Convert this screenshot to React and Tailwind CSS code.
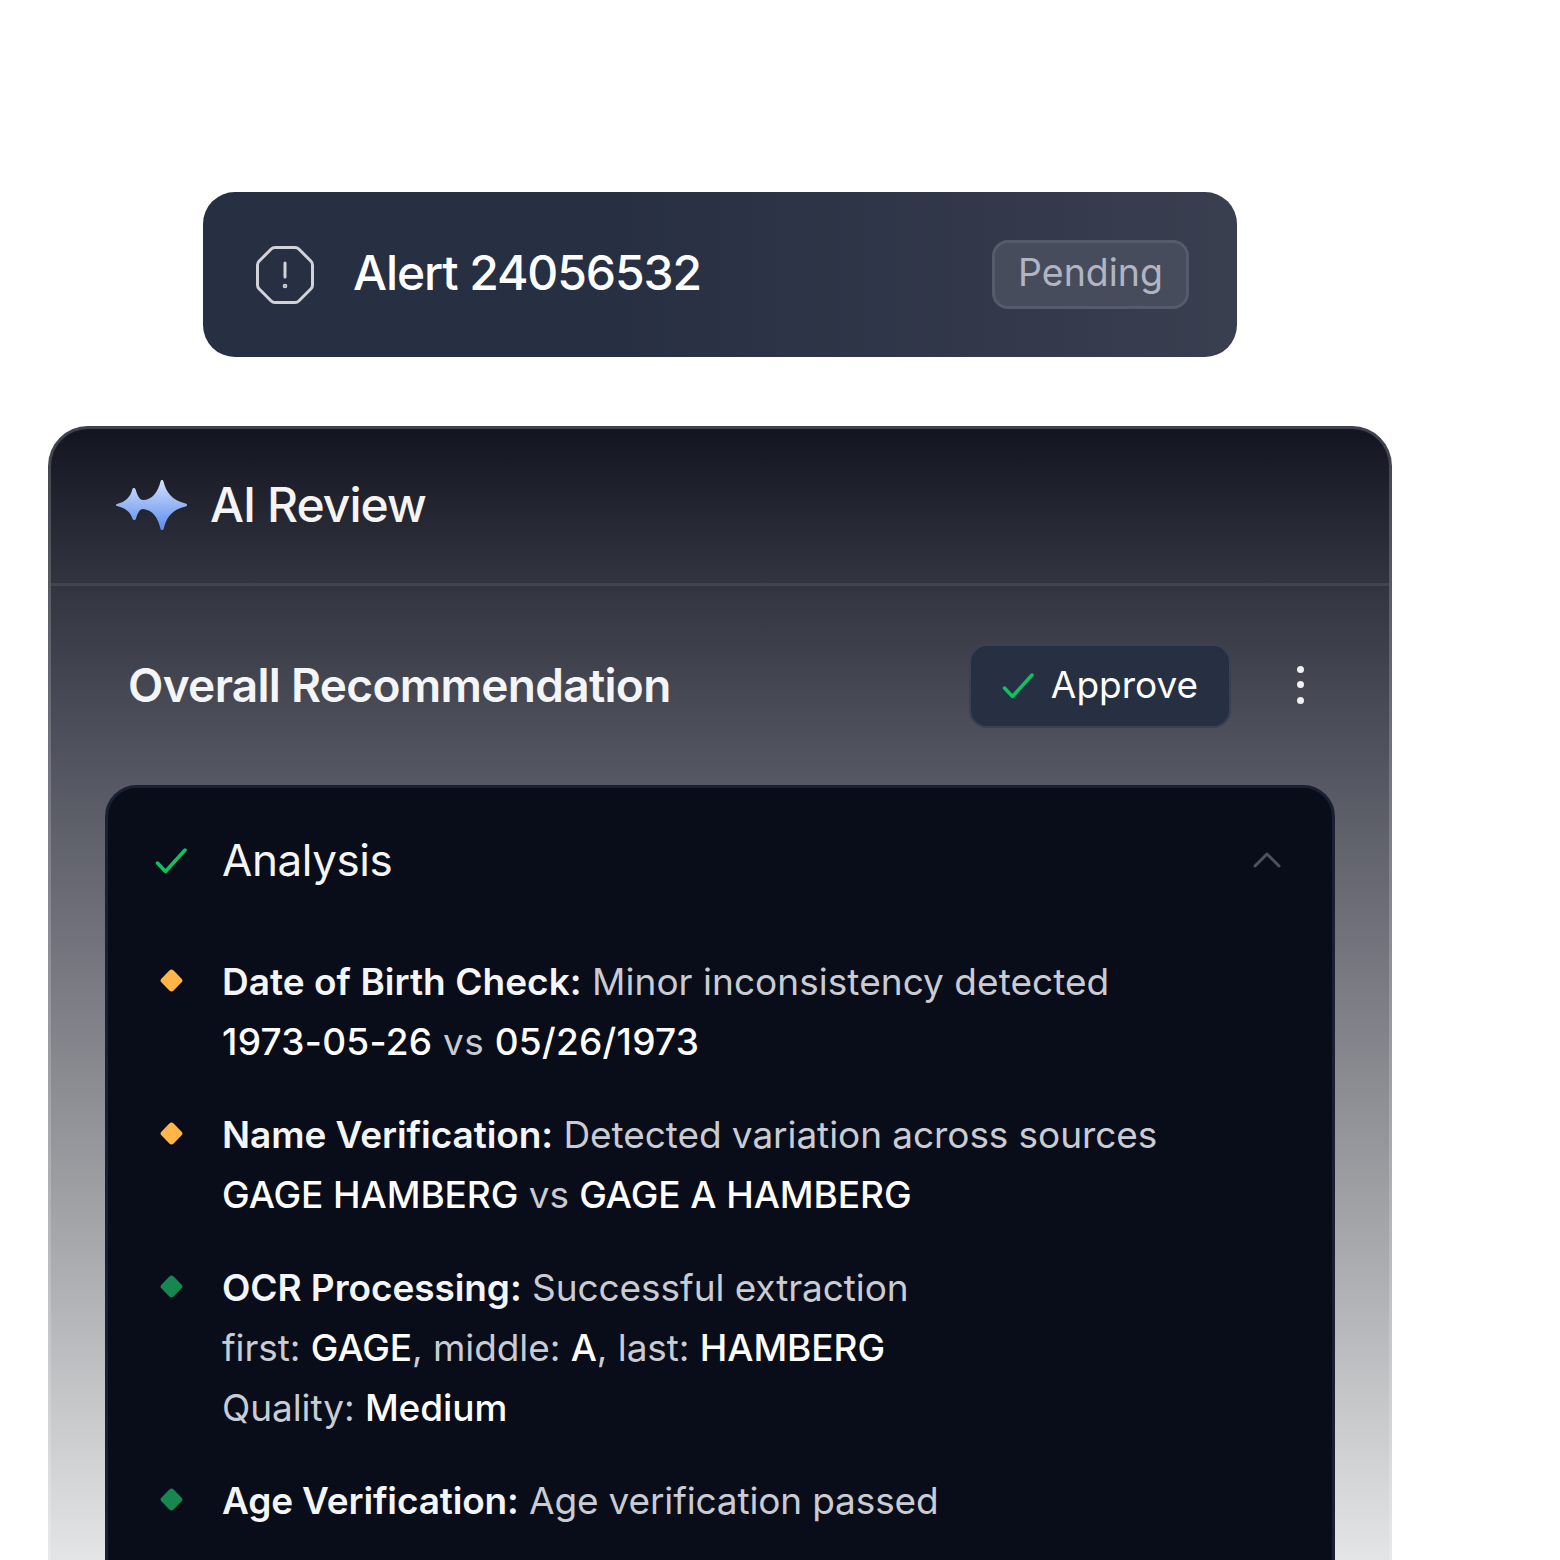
import { ChevronUp } from 'lucide-react'

const findings = [
  {
    color: 'bg-[#ffb547]',
    lines: [
      <span className="tracking-[0.001em]"><b className="font-semibold text-[#f4f5f7]">Date of Birth Check:</b> Minor inconsistency detected</span>,
      <span className="tracking-[0.0075em]"><span className="font-medium text-white">1973-05-26</span> vs <span className="font-medium text-white">05/26/1973</span></span>,
    ],
  },
  {
    color: 'bg-[#ffb547]',
    lines: [
      <><b className="font-semibold text-[#f4f5f7]">Name Verification:</b> Detected variation across sources</>,
      <><span className="font-medium text-white">GAGE HAMBERG</span> vs <span className="font-medium text-white">GAGE A HAMBERG</span></>,
    ],
  },
  {
    color: 'bg-[#16884f]',
    lines: [
      <><b className="font-semibold text-[#f4f5f7]">OCR Processing:</b> Successful extraction</>,
      <>first: <span className="font-medium text-white">GAGE</span>, middle: <span className="font-medium text-white">A</span>, last: <span className="font-medium text-white">HAMBERG</span></>,
      <>Quality: <span className="font-medium text-white">Medium</span></>,
    ],
  },
  {
    color: 'bg-[#16884f]',
    lines: [
      <span className="tracking-[-0.004em]"><b className="font-semibold text-[#f4f5f7]">Age Verification:</b> Age verification passed</span>,
    ],
  },
]

function GreenCheck() {
  return (
    <svg width="32" height="27" viewBox="0 0 32 27" fill="none" stroke="#10c161" strokeWidth="3.5" strokeLinecap="round" strokeLinejoin="round" className="shrink-0">
      <polyline points="2.5,16 10.5,24.5 30,3" />
    </svg>
  )
}

function Sparkle() {
  return (
    <svg width="71" height="50" viewBox="0 0 71 50" className="shrink-0">
      <defs>
        <linearGradient id="spark" x1="0" y1="0" x2="0" y2="1">
          <stop offset="0" stopColor="#d3e0fc" />
          <stop offset="1" stopColor="#5c8cee" />
        </linearGradient>
      </defs>
      <path
        fill="url(#spark)"
        d="M44.5 1.5C45.2-.4 46.8-.4 47.5 1.5C50 12 56 20.5 69.5 23.5C71.5 24 71.5 26 69.5 26.5C56 29.5 50 38 47.8 48.5C47.2 50.5 45 50.5 44.4 48.5C42 38 37 30 27 29C24 29 22 32 20 38.5C19.3 40.5 17 40.5 16.4 38.5C14.5 32 9.5 28 1 26C-.4 25.5 -.4 24.5 1 24C9.5 22 14.5 17 16.2 9.5C16.8 7.5 19 7.5 19.6 9.5C21.5 15.5 23.5 20 27 20C36 20 42 12 44.5 1.5Z"
      />
    </svg>
  )
}

export default function App() {
  return (
    <div className="h-[1560px] overflow-hidden bg-white pt-[192px] font-['Inter',sans-serif]">
      {/* Alert bar */}
      <div className="ml-[203px] flex h-[165px] w-[1034px] items-center justify-between rounded-[32px] bg-gradient-to-r from-[#272f42] from-40% to-[#3a3f50] pl-[52px] pr-[48px]">
        <div className="flex items-center gap-[38px]">
          <svg width="60" height="60" viewBox="0 0 60 60" fill="none" stroke="#d1d3d9" strokeWidth="3" strokeLinecap="round" strokeLinejoin="round">
            <path d="M20 2.5H40C41.5 2.5 42.8 3 43.8 4L56 16.2C57 17.2 57.5 18.5 57.5 20V40C57.5 41.5 57 42.8 56 43.8L43.8 56C42.8 57 41.5 57.5 40 57.5H20C18.5 57.5 17.2 57 16.2 56L4 43.8C3 42.8 2.5 41.5 2.5 40V20C2.5 18.5 3 17.2 4 16.2L16.2 4C17.2 3 18.5 2.5 20 2.5Z" />
            <path d="M30 18V32" />
            <circle cx="30" cy="41" r="0.8" fill="#d1d3d9" />
          </svg>
          <span className="pb-[4px] text-[48px] font-medium leading-none tracking-[-0.023em] text-white">Alert 24056532</span>
        </div>
        <div className="flex h-[69px] w-[197px] items-center justify-center rounded-[16px] border-[3px] border-[#565b6b] bg-[#474c5c] pb-[3px] text-[37.5px] text-[#b0b5c4]">
          Pending
        </div>
      </div>

      {/* AI review panel */}
      <div className="ml-[48px] mt-[69px] h-[1200px] w-[1344px] rounded-t-[40px] border-[3px] border-b-0 border-[#ffffff30] bg-[linear-gradient(180deg,#12151f_0px,#32353f_158px,#565863_358px,#aaabae_833px,#e4e5e6_1134px)] bg-origin-border">
        <div className="flex h-[157px] items-center gap-[23px] border-b-[3px] border-[#ffffff14] pb-[2px] pl-[65px]">
          <Sparkle />
          <span className="text-[48px] font-medium leading-none tracking-[-0.02em] text-[#f5f4f2]">AI Review</span>
        </div>

        <div className="flex h-[199px] items-center justify-between pl-[77px] pr-[85px]">
          <span className="pb-[2px] text-[46px] font-semibold leading-none tracking-[-0.015em] text-[#f4f5f7]">Overall Recommendation</span>
          <div className="flex items-center gap-[68px]">
            <div className="flex h-[80px] w-[258px] items-center justify-center gap-[17px] rounded-[16px] bg-[#272f42] text-[37px] text-white shadow-[0_0_0_2px_#3a4154]">
              <GreenCheck />
              <span className="pb-[2px]">Approve</span>
            </div>
            <div className="flex flex-col gap-[8.5px] pb-[2px]">
              <span className="block h-[7px] w-[7px] rounded-full bg-[#f0f1f3]" />
              <span className="block h-[7px] w-[7px] rounded-full bg-[#f0f1f3]" />
              <span className="block h-[7px] w-[7px] rounded-full bg-[#f0f1f3]" />
            </div>
          </div>
        </div>

        {/* Analysis card */}
        <div className="mx-[54px] h-[900px] rounded-t-[32px] border-[3px] border-[#1a2033] bg-[#090d1a] pl-[47px] pr-[41px] pt-[42px]">
          <div className="flex h-[60px] items-center justify-between">
            <div className="flex items-center gap-[35px]">
              <GreenCheck />
              <span className="text-[44px] font-normal leading-none tracking-[-0.01em] text-[#f4f5f7]">Analysis</span>
            </div>
            <ChevronUp size={48} strokeWidth={1.5} color="#4e505c" />
          </div>

          <div className="mt-[62px] flex flex-col gap-[33px]">
            {findings.map((f, i) => (
              <div key={i} className="flex items-start">
                <span className={`ml-[8px] mt-[20px] block h-[17px] w-[17px] rotate-45 rounded-[3px] ${f.color}`} />
                <div className="ml-[42px] text-[37px] leading-[60px] tracking-[-0.002em] text-[#c9ccd3]">
                  {f.lines.map((line, j) => <div key={j}>{line}</div>)}
                </div>
              </div>
            ))}
          </div>
        </div>
      </div>
    </div>
  )
}
